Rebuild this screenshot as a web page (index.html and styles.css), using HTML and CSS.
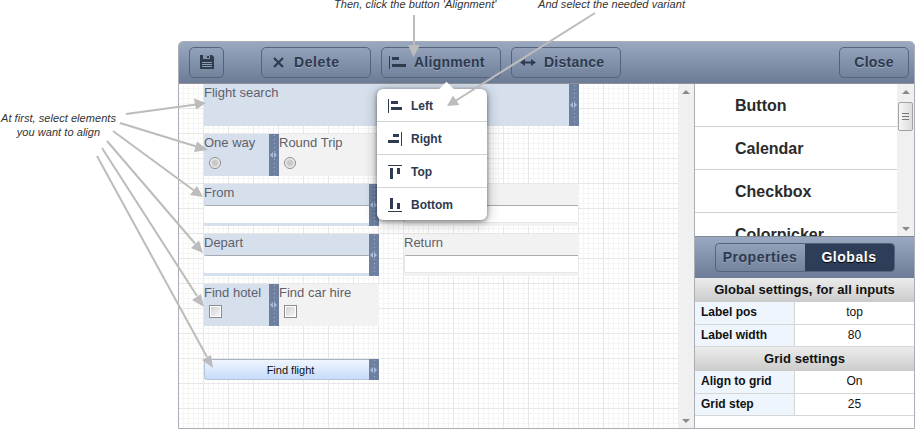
FILE: index.html
```html
<!DOCTYPE html>
<html lang="en">
<head>
<meta charset="utf-8">
<title>Form builder</title>
<link rel="stylesheet" href="styles.css">
</head>
<body>
<div class="window">
  <div class="toolbar">
    <button class="tbtn tbtn-save" aria-label="Save">
      <svg width="16" height="16" viewBox="0 0 16 16"><path fill="#2f3b4f" d="M1 1h12l2 2v12H1z"/><path fill="#8593aa" d="M4 1h7v4H4z"/><path fill="#2f3b4f" d="M8 2h2v2H8z"/><path fill="#8f9bb0" d="M3 8h10v1H3zM3 10h10v1H3zM3 12h10v1H3z"/></svg>
    </button>
    <button class="tbtn tbtn-delete">
      <svg width="11" height="11" viewBox="0 0 11 11"><path stroke="#2f3b4f" stroke-width="2.200" d="M1 1l9 9M10 1l-9 9"/></svg>
      <span>Delete</span>
    </button>
    <button class="tbtn tbtn-align">
      <svg width="17" height="15" viewBox="0 0 17 15"><path fill="#2f3b4f" d="M0 1h1v13H0zM3 2h7v3H3zM3 9h14v3H3z"/></svg>
      <span>Alignment</span>
    </button>
    <button class="tbtn tbtn-distance">
      <svg width="16" height="7" viewBox="0 0 16 7"><path fill="#2f3b4f" d="M0 3.500L5 0v2.500h6V0l5 3.500L11 7V4.500H5V7z"/></svg>
      <span>Distance</span>
    </button>
    <button class="tbtn tbtn-close">Close</button>
  </div>
  <div class="main">
    <div class="canvas">
      <div class="cell sel el-search"><span class="lbl">Flight search</span><i class="handle"></i></div>
      <div class="cell sel el-oneway"><span class="lbl">One way</span><b class="radio"></b><i class="handle"></i></div>
      <div class="cell el-round"><span class="lbl">Round Trip</span><b class="radio"></b></div>
      <div class="cell sel el-from"><span class="lbl">From</span><b class="field"></b><i class="handle"></i></div>
      <div class="cell el-to"><b class="field"></b></div>
      <div class="cell sel el-depart"><span class="lbl">Depart</span><b class="field"></b><i class="handle"></i></div>
      <div class="cell el-return"><span class="lbl">Return</span><b class="field"></b></div>
      <div class="cell sel el-hotel"><span class="lbl">Find hotel</span><b class="check"></b><i class="handle"></i></div>
      <div class="cell el-car"><span class="lbl">Find car hire</span><b class="check"></b></div>
      <div class="el-flight"><span class="flight-btn">Find flight</span><i class="handle"></i></div>
      <div class="menu">
        <div class="menu-item"><svg width="14" height="14" viewBox="0 0 14 14"><path fill="#2f3b4f" d="M0 0h1v14H0zM3 2h7v3H3zM3 8h11v3H3z"/></svg>Left</div>
        <div class="menu-item"><svg width="14" height="14" viewBox="0 0 14 14"><path fill="#2f3b4f" d="M13 0h1v14h-1zM5 2h6v3H5zM0 8h11v3H0z"/></svg>Right</div>
        <div class="menu-item"><svg width="14" height="14" viewBox="0 0 14 14"><path fill="#2f3b4f" d="M0 0h14v1H0zM2 3h3v11H2zM9 3h3v6H9z"/></svg>Top</div>
        <div class="menu-item"><svg width="14" height="14" viewBox="0 0 14 14"><path fill="#2f3b4f" d="M0 13h14v1H0zM2 0h3v11H2zM9 5h3v6H9z"/></svg>Bottom</div>
      </div>
    </div>
    <div class="vscroll vscroll-canvas"><i class="up"></i><i class="down"></i></div>
    <div class="side">
      <div class="list">
        <div class="list-items">
          <div class="list-item">Button</div>
          <div class="list-item">Calendar</div>
          <div class="list-item">Checkbox</div>
          <div class="list-item">Colorpicker</div>
        </div>
        <div class="vscroll vscroll-list"><i class="up"></i><span class="thumb"></span><i class="down"></i></div>
      </div>
      <div class="side-head">
        <div class="toggle"><span class="tab">Properties</span><span class="tab tab-on">Globals</span></div>
      </div>
      <div class="props">
        <div class="sect">Global settings, for all inputs</div>
        <div class="row"><span class="key">Label pos</span><span class="val">top</span></div>
        <div class="row"><span class="key">Label width</span><span class="val">80</span></div>
        <div class="sect">Grid settings</div>
        <div class="row"><span class="key">Align to grid</span><span class="val">On</span></div>
        <div class="row"><span class="key">Grid step</span><span class="val">25</span></div>
      </div>
    </div>
  </div>
</div>

<p class="note note-first">At first, select elements<br>you want to align</p>
<p class="note note-top note-then">Then, click the button 'Alignment'</p>
<p class="note note-top note-and">And select the needed variant</p>

<svg class="arrows" width="915" height="429" viewBox="0 0 915 429">
  <g fill="none" stroke="#bcbcbc" stroke-width="2">
    <path d="M126 114L196 104.500"/>
    <path d="M120 123L198 147"/>
    <path d="M113 131L194 190.500"/>
    <path d="M107 141L195 243.500"/>
    <path d="M102 148L197 296"/>
    <path d="M97 156L207 357"/>
    <path d="M414 15V46"/>
    <path d="M595 13L456 100.500"/>
  </g>
  <g fill="#bcbcbc">
    <path d="M206 103L194 98.500L196 109.500z"/>
    <path d="M208 150L197 141.500L194 152z"/>
    <path d="M203 197L197 186L190 195z"/>
    <path d="M203 253L199 240.500L191 248z"/>
    <path d="M204 307L201 294L192 300z"/>
    <path d="M213 368L211 355L202 360z"/>
    <path d="M413.500 57L408 45H420z"/>
    <path d="M447 106L453 95.500L459.500 105z"/>
  </g>
</svg>
</body>
</html>
```
FILE: styles.css
```css
* { box-sizing: border-box; }
html, body { margin: 0; padding: 0; }
body {
  width: 915px;
  height: 429px;
  overflow: hidden;
  background: #fff;
  font-family: "Liberation Sans", Arial, sans-serif;
  padding: 41px 0 0 178px;
  position: relative;
}

.window {
  width: 737px;
  height: 388px;
  border: 1px solid #a9aeb6;
  border-radius: 5px 5px 0 0;
  overflow: hidden;
  display: flex;
  flex-direction: column;
  background: #fff;
}

.toolbar {
  height: 42px;
  flex: none;
  display: flex;
  align-items: center;
  padding: 0 5px 1px 10px;
  background: linear-gradient(#9aa8c0, #6c7c96);
  border-bottom: 1px solid #8f9299;
}

.tbtn {
  height: 31px;
  border: 1px solid #55637c;
  border-radius: 5px;
  background: transparent;
  display: flex;
  align-items: center;
  justify-content: flex-start;
  padding: 0;
  font: bold 14px "Liberation Sans", Arial, sans-serif;
  letter-spacing: 0.25px;
  color: #2d394f;
  text-shadow: 0 1px 0 rgba(255, 255, 255, 0.25);
}
.tbtn-save { width: 35px; justify-content: center; }
.tbtn-delete { width: 110px; margin-left: 37px; gap: 10px; padding-left: 11px; letter-spacing: 0.6px; }
.tbtn-align { width: 120px; margin-left: 10px; gap: 8px; padding-left: 7px; }
.tbtn-distance { width: 110px; margin-left: 10px; gap: 8px; padding-left: 8px; }
.tbtn-close { width: 70px; margin-left: auto; justify-content: center; }

.main { flex: 1; display: flex; min-height: 0; }

.canvas {
  position: relative;
  width: 499px;
  flex: none;
  background-color: #fff;
  background-image:
    linear-gradient(to right, transparent 24px, #e7e7e7 24px),
    linear-gradient(to bottom, transparent 24px, #e7e7e7 24px),
    linear-gradient(to right, transparent 4px, #f5f5f5 4px),
    linear-gradient(to bottom, transparent 4px, #f5f5f5 4px);
  background-size: 25px 25px, 25px 25px, 5px 5px, 5px 5px;
}

.cell {
  position: absolute;
  background: #f2f2f2;
  color: #5f5f6b;
  font-size: 13px;
  line-height: 16px;
}
.sel { background: #d6e0ed; }
.lbl { position: absolute; left: 0; top: 1px; white-space: nowrap; }

.el-search { left: 25px; top: 0; width: 375px; height: 42px; }
.el-oneway { left: 25px; top: 50px; width: 75px; height: 42px; }
.el-round { left: 100px; top: 50px; width: 100px; height: 42px; }
.el-from { left: 25px; top: 100px; width: 175px; height: 42px; }
.el-to { left: 225px; top: 100px; width: 175px; height: 42px; }
.el-depart { left: 25px; top: 150px; width: 175px; height: 42px; }
.el-return { left: 225px; top: 150px; width: 175px; height: 42px; }
.el-hotel { left: 25px; top: 200px; width: 75px; height: 42px; }
.el-car { left: 100px; top: 200px; width: 100px; height: 42px; }

.handle {
  position: absolute;
  right: 0;
  top: 0;
  bottom: 0;
  width: 10px;
  background-color: #6e80a0;
  background-image: linear-gradient(#a3b2ca 1px, transparent 1px);
  background-size: 1px 4px;
  background-repeat: repeat-y;
  background-position: 5px 1px;
}
.handle::before, .handle::after {
  content: "";
  position: absolute;
  top: 50%;
  margin-top: -3px;
  border-top: 3px solid transparent;
  border-bottom: 3px solid transparent;
}
.handle::before { left: 1px; border-right: 3.500px solid #a9bcd8; }
.handle::after { left: 5px; border-left: 3.500px solid #a9bcd8; }

.radio {
  position: absolute;
  left: 5px;
  top: 23px;
  width: 12px;
  height: 12px;
  border: 1px solid #8c8c8c;
  border-radius: 50%;
  background: radial-gradient(circle, #c9c9c9 35%, #f6f6f6 70%);
}
.check {
  position: absolute;
  left: 5px;
  top: 21px;
  width: 13px;
  height: 13px;
  border: 1px solid #8c8c8c;
  background: linear-gradient(135deg, #d0d0d0, #f8f8f8);
  box-shadow: inset 0 0 0 1px #fff;
}
.field {
  position: absolute;
  left: 0;
  right: 0;
  top: 21px;
  height: 18px;
  background: #fff;
  border: 1px solid #e6e6ea;
  border-top-color: #a9a9b0;
  border-radius: 2px;
}
.sel .field { border-color: #fff; border-top-color: #a9a9b0; }

.el-flight {
  position: absolute;
  left: 25px;
  top: 275px;
  width: 175px;
  height: 21px;
}
.flight-btn {
  display: block;
  height: 21px;
  border-top: 1px solid #a9b3c2;
  border-left: 1px solid #b9c6d8;
  border-bottom: 1px solid #b9c6d8;
  border-radius: 3px 0 0 3px;
  background: linear-gradient(#f0f6fe, #c5dcfb);
  color: #111;
  font-size: 11px;
  line-height: 20px;
  text-align: center;
  padding-right: 3px;
}

.menu {
  position: absolute;
  left: 198px;
  top: 5px;
  width: 110px;
  height: 131px;
  background: #fff;
  border-radius: 6px;
  box-shadow: 0 1px 4px rgba(0, 0, 0, 0.45), 0 2px 14px rgba(0, 0, 0, 0.3);
}
.menu::before {
  content: "";
  position: absolute;
  left: 64px;
  top: -5px;
  width: 11px;
  height: 11px;
  background: #fff;
  transform: rotate(45deg);
}
.menu-item {
  position: relative;
  height: 33px;
  display: flex;
  align-items: center;
  gap: 9px;
  padding: 1px 0 0 11px;
  font-size: 12px;
  font-weight: bold;
  color: #2d394f;
  border-bottom: 1px solid #d4d4d4;
}
.menu-item:last-child { border-bottom: 0; }

.vscroll {
  position: relative;
  flex: none;
  background: #f0f0f0;
}
.vscroll .up, .vscroll .down {
  position: absolute;
  left: 50%;
  margin-left: -4px;
  border-left: 4px solid transparent;
  border-right: 4px solid transparent;
}
.vscroll .up { border-bottom: 4px solid #8a8a8a; top: 6px; }
.vscroll .down { border-top: 4px solid #8a8a8a; bottom: 5px; }
.vscroll-canvas { width: 17px; border-right: 1px solid #a9aeb6; }
.vscroll-list { width: 17px; background: #f0f0f0; }
.thumb {
  position: absolute;
  left: 1px;
  right: 1px;
  top: 18px;
  height: 29px;
  border: 1px solid #a3a3a3;
  border-radius: 2px;
  background:
    repeating-linear-gradient(#777 0 1px, transparent 1px 3px) center / 7px 7px no-repeat,
    linear-gradient(to right, #f6f6f6, #dcdcdc);
}

.side {
  flex: 1;
  min-width: 0;
  display: flex;
  flex-direction: column;
}
.list { height: 152px; flex: none; display: flex; overflow: hidden; }
.list-items { flex: 1; min-width: 0; }
.list-item {
  height: 43px;
  padding-left: 40px;
  line-height: 43px;
  font-size: 16px;
  font-weight: bold;
  color: #2b2b2b;
  border-bottom: 1px solid #cfcfcf;
}
.side-head {
  height: 42px;
  flex: none;
  display: flex;
  justify-content: center;
  align-items: center;
  background: linear-gradient(#9aa8c0, #6c7c96);
  border-top: 1px solid #7e8794;
}
.toggle {
  width: 180px;
  height: 29px;
  border: 1px solid #55637c;
  border-radius: 4px;
  overflow: hidden;
  display: flex;
  font-size: 14px;
  font-weight: bold;
  letter-spacing: 0.55px;
  line-height: 26px;
  text-align: center;
}
.tab {
  width: 89px;
  color: #2d394f;
  text-shadow: 0 1px 0 rgba(255, 255, 255, 0.2);
}
.tab-on { flex: 1; background: #2f3e58; color: #fff; text-shadow: 0 1px 1px #000; }

.props { font-size: 12px; color: #111; }
.sect {
  height: 24px;
  line-height: 23px;
  text-align: center;
  font-size: 13px;
  font-weight: bold;
  letter-spacing: 0.05px;
  background: linear-gradient(#ececec, #cbcbcb);
}
.row {
  display: flex;
  height: 22.500px;
  line-height: 21px;
  border-bottom: 1px solid #d6d6d6;
}
.key {
  width: 100px;
  flex: none;
  padding-left: 6px;
  font-weight: bold;
  background: #eef5fd;
  border-right: 1px solid #d6d6d6;
}
.val { flex: 1; text-align: center; }

.note {
  position: absolute;
  margin: 0;
  font-size: 11px;
  font-style: italic;
  letter-spacing: 0.05px;
  color: #333;
  white-space: nowrap;
  line-height: 14px;
}
.note-first { left: 0; top: 111px; width: 117px; text-align: center; }
.note-top { top: 0; line-height: 8px; }
.note-then { left: 334px; }
.note-and { left: 538px; }

.arrows { position: absolute; left: 0; top: 0; pointer-events: none; }
```
